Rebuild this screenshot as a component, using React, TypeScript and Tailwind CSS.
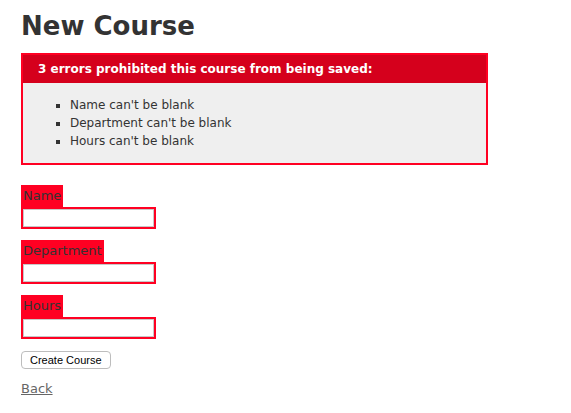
import React from "react";

const font = { fontFamily: '"DejaVu Sans", Verdana, sans-serif' };

function Field({ label }: { label: string }) {
  return (
    <div className="flex flex-col items-start">
      <div className="bg-[#ff0022] p-[2px]">
        <label className="block text-[13px] leading-[18px] text-[#333]">{label}</label>
      </div>
      <div className="bg-[#ff0022] p-[2px]">
        <input
          type="text"
          className="block w-[131px] h-[18px] bg-white border border-[#c8c8c8] outline-none"
        />
      </div>
    </div>
  );
}

export default function App() {
  return (
    <div className="bg-white min-h-[413px] w-[571px] text-[#333] px-[21px] pt-[11px]" style={font}>
      <h1 className="text-[26px] leading-[30px] font-bold text-[#333]">New Course</h1>
      <div className="mt-[12px] w-[467px] border-2 border-[#ff0022] bg-[#efefef]">
        <h2 className="bg-[#d5001c] text-white font-bold text-[12px] leading-[18px] pl-[15px] pr-[5px] py-[5px]">
          3 errors prohibited this course from being saved:
        </h2>
        <ul className="my-[13px] pl-[47px] list-[square] text-[12px] leading-[18px] text-[#333]">
          <li>Name can't be blank</li>
          <li>Department can't be blank</li>
          <li>Hours can't be blank</li>
        </ul>
      </div>
      <div className="mt-[20px] flex flex-col gap-[11px]">
        <Field label="Name" />
        <Field label="Department" />
        <Field label="Hours" />
      </div>
      <button
        className="mt-[12px] block h-[18px] px-[8px] bg-white border border-[#bdbdbd] rounded-[4px] text-[11px] leading-[16px] text-black"
        style={{ fontFamily: '"Liberation Sans", Arial, sans-serif' }}
      >
        Create Course
      </button>
      <a href="#" className="mt-[11px] inline-block text-[13px] leading-[18px] text-[#666] underline">
        Back
      </a>
    </div>
  );
}
